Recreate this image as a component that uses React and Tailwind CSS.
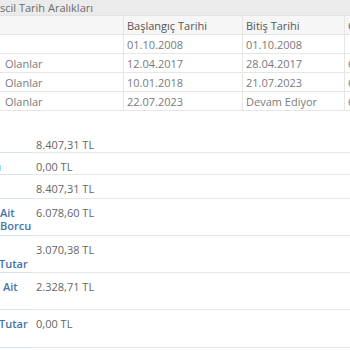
const rows = [
  { label: "", start: "01.10.2008", end: "01.10.2008", extra: "" },
  { label: "Olanlar", start: "12.04.2017", end: "28.04.2017", extra: "6.078,60" },
  { label: "Olanlar", start: "10.01.2018", end: "21.07.2023", extra: "6.078,60" },
  { label: "Olanlar", start: "22.07.2023", end: "Devam Ediyor", extra: "6.078,60" },
];

const Cell = ({ children, last, className = "" }) => (
  <div
    className={`h-[19px] leading-[19px] px-[3px] whitespace-nowrap overflow-hidden border-b border-[#e6e6e6] ${
      last ? "" : "border-r"
    } ${className}`}
  >
    {children}
  </div>
);

const SummaryRow = ({ h, label, value, labelPad = "pt-[7px]" }) => (
  <div className={`flex ${h}`}>
    <div className={`w-[33px] shrink-0 overflow-hidden border-b border-[#d9e4f0] ${labelPad} leading-[13px] font-semibold text-[#4274ab]`}>
      {label}
    </div>
    <div className="flex-1 border-b border-[#e8e8e8] pl-[3px] pt-[7px] leading-[13px] text-[#666]">
      {value}
    </div>
  </div>
);

export default function App() {
  return (
    <div
      className="w-[350px] h-[350px] overflow-hidden bg-white text-[11px] text-[#7a7a7a]"
      style={{ fontFamily: '"Open Sans", "Liberation Sans", sans-serif' }}
    >
      {/* Section title */}
      <div className="h-[16px] leading-[15px] bg-[#ebebeb] border-b border-[#e2e2e2] text-[#6a6a6a] whitespace-nowrap">
        scil Tarih Aralıkları
      </div>

      {/* Date ranges table */}
      <div className="grid grid-cols-[124px_119px_102px_60px] w-[405px]">
        <Cell className="bg-[#f6f6f6]" />
        <Cell className="bg-[#f6f6f6] text-[#555]">Başlangıç Tarihi</Cell>
        <Cell className="bg-[#f6f6f6] text-[#555]">Bitiş Tarihi</Cell>
        <Cell className="bg-[#f6f6f6] text-[#555]" last>Gün</Cell>
        {rows.map((r, i) => (
          <div key={i} className="contents">
            <Cell className="pl-[5px]">{r.label}</Cell>
            <Cell>{r.start}</Cell>
            <Cell>{r.end}</Cell>
            <Cell last>{r.extra}</Cell>
          </div>
        ))}
      </div>

      {/* Summary */}
      <div className="mt-[20px]">
        <SummaryRow h="h-[22px]" label="" value="8.407,31 TL" />
        <SummaryRow h="h-[22px]" label={<span className="block -ml-[2px]">ı</span>} value="0,00 TL" />
        <SummaryRow h="h-[24px]" label="" value="8.407,31 TL" />
        <SummaryRow
          h="h-[37px]"
          label={
            <>
              <span className="block">Ait</span>
              <span className="block">Borcu</span>
            </>
          }
          value="6.078,60 TL"
        />
        <SummaryRow
          h="h-[37px]"
          labelPad="pt-[21px]"
          label={<span className="block -ml-[1px]">Tutar</span>}
          value="3.070,38 TL"
        />
        <SummaryRow h="h-[37px]" label={<span className="block pl-[3px]">Ait</span>} value="2.328,71 TL" />
        <SummaryRow h="h-[38px]" label={<span className="block -ml-[1px]">Tutar</span>} value="0,00 TL" />
      </div>
    </div>
  );
}
